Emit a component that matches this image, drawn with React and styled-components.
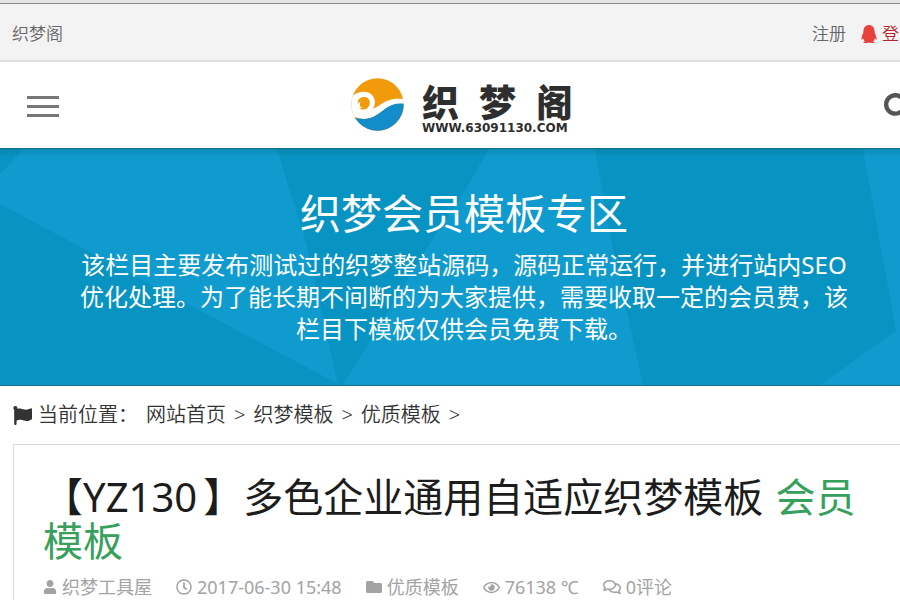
import styled, { createGlobalStyle } from "styled-components";
import {
  FaFlag,
  FaQq,
  FaSearch,
  FaUser,
  FaRegClock,
  FaFolder,
  FaRegEye,
  FaRegComments,
} from "react-icons/fa";

const GlobalStyle = createGlobalStyle`
  * {
    box-sizing: border-box;
  }
  body {
    margin: 0;
    background-color: #ffffff;
    font-family: "Noto Sans", "Noto Sans CJK SC", sans-serif;
    font-weight: 350;
    overflow-x: hidden;
  }
  a {
    color: inherit;
    text-decoration: none;
  }
  button {
    display: flex;
    border: none;
    background: none;
    cursor: pointer;
  }
`;

const Viewport = styled.div`
  overflow: hidden;
`;

const Page = styled.div`
  width: calc(100% + 28px);
`;

const TopBar = styled.div`
  display: flex;
  align-items: center;
  justify-content: space-between;
  height: 62px;
  padding: 4px 12px 0;
  border-top: 3px solid #e4e4e4;
  border-bottom: 2px solid #dfdfdf;
  background-color: #f3f3f3;
  box-shadow: inset 0 1px 0 #8c8c8c;
  color: #666666;
  font-size: 17px;
  line-height: 24px;
`;

const TopLinks = styled.nav`
  display: flex;
  gap: 14px;
`;

const TopLink = styled.a`
  display: flex;
  align-items: center;
  gap: 4px;
  color: ${(props) => (props.$login ? "#b5242b" : "#666666")};
  svg {
    color: #e8403a;
  }
`;

const Header = styled.header`
  display: grid;
  grid-template-columns: 1fr auto 1fr;
  align-items: center;
  height: 86px;
  padding: 2px 16px 0;
  background-color: #ffffff;
`;

const MenuButton = styled.button`
  flex-direction: column;
  justify-self: start;
  gap: 6px;
  padding: 8px 11px;
`;

const MenuBar = styled.span`
  width: 32px;
  height: 3px;
  background-color: #777777;
`;

const SearchButton = styled.button`
  justify-self: end;
  padding: 2px 0 0;
  color: #555555;
`;

const Logo = styled.a`
  display: flex;
  align-items: flex-start;
  gap: 18px;
  margin-right: 4px;
  color: #2e2e2e;
`;

const LogoText = styled.div`
  display: flex;
  flex-direction: column;
  min-width: 151px;
  padding-top: 3px;
`;

const LogoName = styled.div`
  display: flex;
  justify-content: space-between;
  font-family: "Noto Sans CJK SC", sans-serif;
  font-size: 37px;
  font-weight: 900;
  line-height: 40px;
`;

const LogoUrl = styled.div`
  font-family: "DejaVu Sans", sans-serif;
  font-size: 12px;
  font-weight: 700;
  line-height: 14px;
`;

const Hero = styled.section`
  position: relative;
  height: 238px;
  padding: 40px 72px 0;
  border-top: 1px solid #14708f;
  border-bottom: 1px solid #14708f;
  background-color: #109bcf;
  color: #ffffff;
  text-align: center;
  &::after {
    content: "";
    position: absolute;
    inset: 0;
    background: linear-gradient(#00506438, #00506400 8px);
  }
`;

const HeroShapes = styled.svg`
  position: absolute;
  inset: 0;
  width: 100%;
  height: 100%;
`;

const HeroBody = styled.div`
  position: relative;
`;

const HeroTitle = styled.h1`
  margin: 0 0 12px;
  font-size: 41px;
  font-weight: 400;
  line-height: 48px;
`;

const HeroText = styled.p`
  margin: 0;
  font-size: 24px;
  font-weight: 400;
  line-height: 32px;
`;

const Breadcrumb = styled.nav`
  display: flex;
  align-items: center;
  gap: 8px;
  height: 58px;
  padding: 0 13px;
  color: #333333;
  font-size: 20px;
  line-height: 28px;
`;

const Here = styled.span`
  display: flex;
  align-items: center;
  gap: 6px;
`;

const Crumb = styled.span`
  display: flex;
  gap: 8px;
`;

const Article = styled.article`
  margin: 0 13px;
  padding: 30px 29px;
  border: 1px solid #d9d9d9;
  background-color: #ffffff;
`;

const Title = styled.h2`
  margin: 0 0 14px;
  color: #1c1c1c;
  font-size: 40px;
  font-weight: 400;
  line-height: 44px;
  a {
    margin-left: 2px;
    color: #36a05c;
  }
`;

const Code = styled.span`
  margin-right: 6px;
`;

const Meta = styled.div`
  display: flex;
  gap: 24px;
  color: #a3a3a3;
  font-size: 18px;
  font-weight: 400;
  line-height: 20px;
`;

const MetaItem = styled.span`
  display: flex;
  align-items: center;
  gap: 5px;
  white-space: nowrap;
`;

const LogoMark = () => (
  <svg width="53" height="53" viewBox="0 0 156 156" aria-hidden="true">
    <clipPath id="disc">
      <circle cx="78" cy="78" r="77" />
    </clipPath>
    <g clipPath="url(#disc)">
      <rect width="156" height="156" fill="#f09a0c" />
      <path
        d="M0 58 C14 38 48 34 62 50 C74 64 72 80 64 90 C88 84 100 56 156 62 V78 C116 72 100 94 74 110 C54 124 24 124 0 110 Z"
        fill="#ffffff"
      />
      <path
        d="M0 112 C24 124 54 124 74 110 C100 94 116 70 156 76 V156 H0 Z"
        fill="#138cca"
      />
      <path
        d="M20 76 C18 62 30 54 42 56 C56 59 60 76 50 87 C42 96 28 94 24 87 C34 90 43 84 41 76 C39 68 26 66 20 76 Z"
        fill="#f09a0c"
      />
      <circle cx="36" cy="77" r="10" fill="#f09a0c" />
    </g>
  </svg>
);

const crumbs = ["网站首页", "织梦模板", "优质模板"];

const metaItems = [
  { icon: FaUser, size: 14, text: "织梦工具屋" },
  { icon: FaRegClock, size: 16, text: "2017-06-30 15:48" },
  { icon: FaFolder, size: 16, text: "优质模板" },
  { icon: FaRegEye, size: 17, text: "76138 ℃" },
  { icon: FaRegComments, size: 18, text: "0评论" },
];

const App = () => {
  return (
    <Viewport>
      <GlobalStyle />
      <Page>
        <TopBar>
          <a href="#home">织梦阁</a>
          <TopLinks>
            <TopLink href="#register">注册</TopLink>
            <TopLink href="#login" $login>
              <FaQq size={18} />
              登录
            </TopLink>
          </TopLinks>
        </TopBar>
        <Header>
          <MenuButton type="button" aria-label="菜单">
            <MenuBar />
            <MenuBar />
            <MenuBar />
          </MenuButton>
          <Logo href="#home">
            <LogoMark />
            <LogoText>
              <LogoName>
                <span>织</span>
                <span>梦</span>
                <span>阁</span>
              </LogoName>
              <LogoUrl>WWW.63091130.COM</LogoUrl>
            </LogoText>
          </Logo>
          <SearchButton type="button" aria-label="搜索">
            <FaSearch size={28} />
          </SearchButton>
        </Header>
        <Hero>
          <HeroShapes viewBox="0 0 928 236" preserveAspectRatio="none">
            <g fill="#0894c3">
              <path d="M0 55 L340 236 H0 Z" />
              <path d="M0 0 H24 L0 25 Z" />
              <path d="M277 0 H489 L463 45 L430 94 L343 236 H338 L307 97 Z" />
              <path d="M595 0 H863 L896 182 L820 236 H643 L612 96 Z" />
            </g>
          </HeroShapes>
          <HeroBody>
            <HeroTitle>织梦会员模板专区</HeroTitle>
            <HeroText>
              该栏目主要发布测试过的织梦整站源码，源码正常运行，并进行站内SEO优化处理。为了能长期不间断的为大家提供，需要收取一定的会员费，该栏目下模板仅供会员免费下载。
            </HeroText>
          </HeroBody>
        </Hero>
        <Breadcrumb>
          <Here>
            <FaFlag size={19} />
            当前位置：
          </Here>
          {crumbs.map((crumb) => (
            <Crumb key={crumb}>
              <a href="#list">{crumb}</a>
              <span>&gt;</span>
            </Crumb>
          ))}
        </Breadcrumb>
        <Article>
          <Title>
            【<Code>YZ130</Code>】多色企业通用自适应织梦模板{" "}
            <a href="#vip">会员模板</a>
          </Title>
          <Meta>
            {metaItems.map(({ icon: Icon, size, text }) => (
              <MetaItem key={text}>
                <Icon size={size} />
                {text}
              </MetaItem>
            ))}
          </Meta>
        </Article>
      </Page>
    </Viewport>
  );
};

export default App;
